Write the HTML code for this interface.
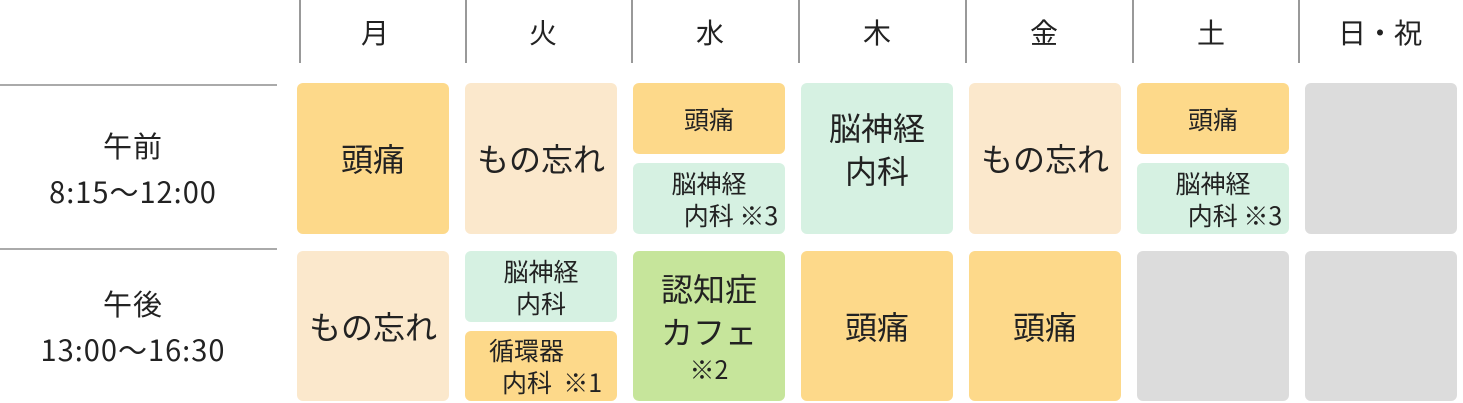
<!DOCTYPE html><html><head><meta charset="utf-8"><style>
body{margin:0;width:1463px;height:403px;background:#fff;position:relative;overflow:hidden;font-family:"Noto Sans CJK JP","Liberation Sans",sans-serif;color:#222}
.h{position:absolute;top:0;height:63px;width:2px;background:#999}
.d{position:absolute;top:12px;width:166px;text-align:center;font-size:28px;line-height:40px}
.hl{position:absolute;left:0;width:277px;height:2px;background:#aaa}
.lab{position:absolute;left:0;width:266px;text-align:center;font-size:29px;line-height:46px;letter-spacing:1px}
.c{position:absolute;width:152px;border-radius:6px;display:flex;flex-direction:column;align-items:center;justify-content:center;text-align:center;font-size:32px;line-height:43px}
.s{font-size:25px;line-height:32px}
.o{background:#fdd98a}.p{background:#fbe8cc}.m{background:#d6f1e2}.g{background:#c6e59b}.x{background:#dcdcdc}
</style></head><body>
<div class="h" style="left:299px"></div><div class="h" style="left:465px"></div><div class="h" style="left:631px"></div><div class="h" style="left:798px"></div><div class="h" style="left:965px"></div><div class="h" style="left:1132px"></div><div class="h" style="left:1298px"></div>
<div class="d" style="left:292px">月</div><div class="d" style="left:460px">火</div><div class="d" style="left:627px">水</div><div class="d" style="left:794px">木</div><div class="d" style="left:961px">金</div><div class="d" style="left:1128px">土</div><div class="d" style="left:1297px">日・祝</div>
<div class="hl" style="top:84px"></div><div class="hl" style="top:248px"></div>
<div class="lab" style="top:122px">午前<br>8:15〜12:00</div>
<div class="lab" style="top:280px">午後<br>13:00〜16:30</div>

<div class="c o" style="left:297px;top:83px;height:151px">頭痛</div>
<div class="c p" style="left:465px;top:83px;height:151px">もの忘れ</div>
<div class="c o s" style="left:633px;top:83px;height:71px">頭痛</div>
<div class="c m s" style="left:633px;top:163px;height:71px"><span>脳神経</span><span style="margin-left:44px">内科 ※3</span></div>
<div class="c m" style="left:801px;top:83px;height:151px;padding-bottom:20px;box-sizing:border-box">脳神経<br>内科</div>
<div class="c p" style="left:969px;top:83px;height:151px">もの忘れ</div>
<div class="c o s" style="left:1137px;top:83px;height:71px">頭痛</div>
<div class="c m s" style="left:1137px;top:163px;height:71px"><span>脳神経</span><span style="margin-left:44px">内科 ※3</span></div>
<div class="c x" style="left:1305px;top:83px;height:151px"></div>

<div class="c p" style="left:297px;top:251px;height:150px">もの忘れ</div>
<div class="c m s" style="left:465px;top:251px;height:71px">脳神経<br>内科</div>
<div class="c o s" style="left:465px;top:331px;height:70px;align-items:flex-start;padding-left:24px;box-sizing:border-box"><span>循環器</span><span style="margin-left:13px">内科&nbsp; ※1</span></div>
<div class="c g" style="left:633px;top:251px;height:150px">認知症<br>カフェ<span class="s">※2</span></div>
<div class="c o" style="left:801px;top:251px;height:150px">頭痛</div>
<div class="c o" style="left:969px;top:251px;height:150px">頭痛</div>
<div class="c x" style="left:1137px;top:251px;height:150px"></div>
<div class="c x" style="left:1305px;top:251px;height:150px"></div>
</body></html>
